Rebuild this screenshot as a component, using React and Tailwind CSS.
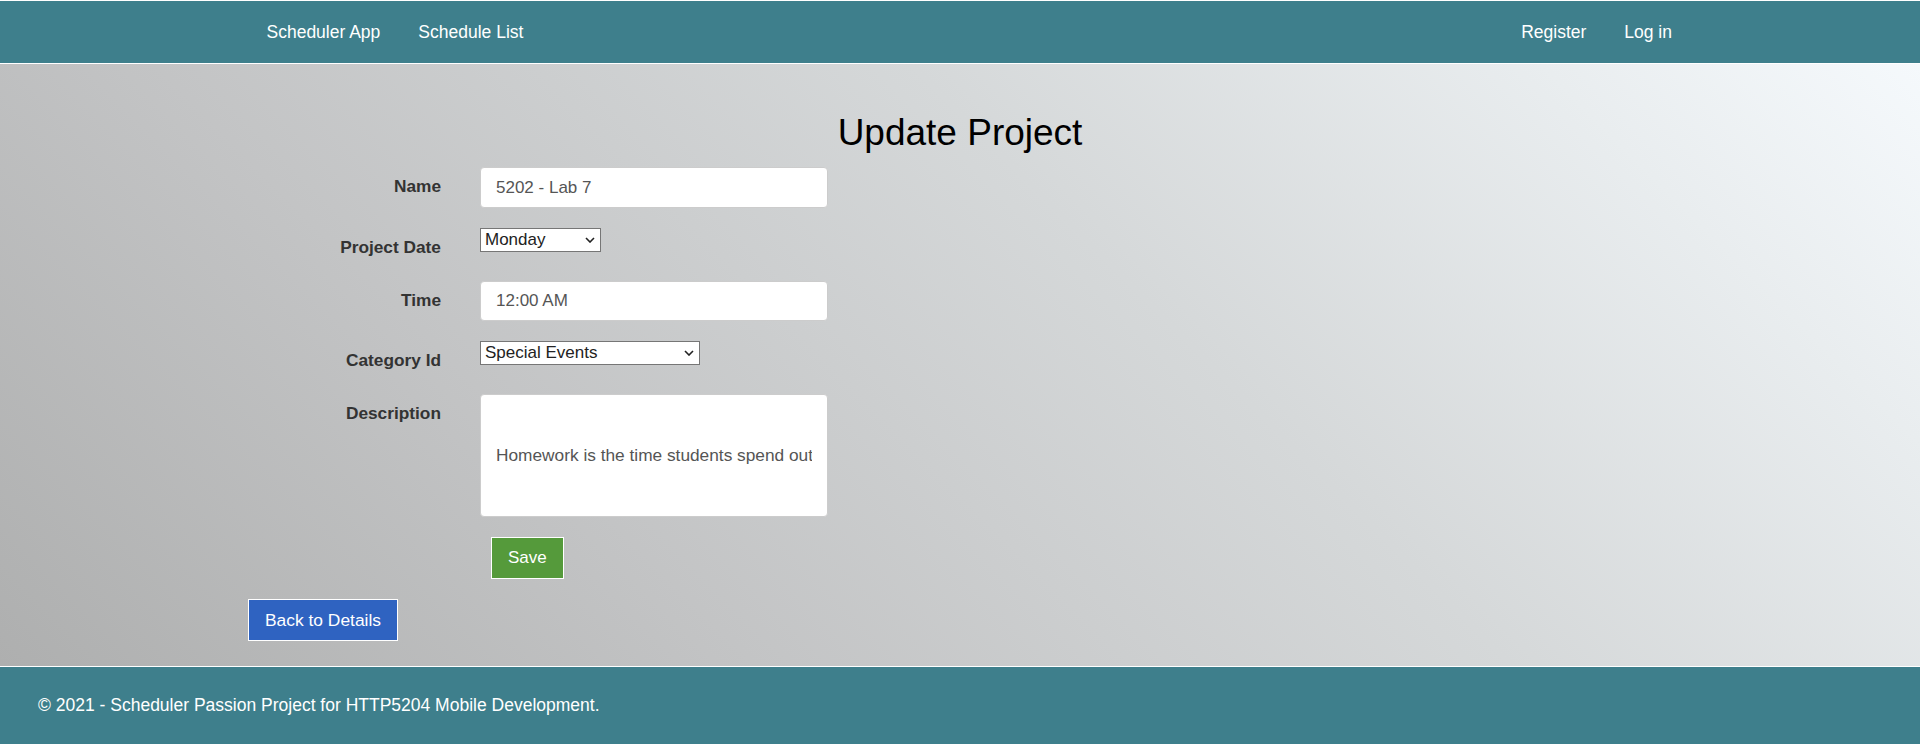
import { useState } from 'react';

// Small chevron used by the native-looking selects
const Chevron = () => (
    <svg width="10" height="6" viewBox="0 0 10 6" className="pointer-events-none absolute right-[6px] top-1/2 -translate-y-1/2">
        <path d="M1 1l4 4 4-4" fill="none" stroke="#222" strokeWidth="1.6" />
    </svg>
);

const FormRow = ({ label, children }) => (
    <div className="flex items-start min-h-[33px]">
        <label className="w-[193px] shrink-0 pt-[7px] text-right font-bold text-[17.3px] leading-[25px] text-[#333]">
            {label}
        </label>
        <div className="ml-[39px]">{children}</div>
    </div>
);

const App = () => {
    const [name, setName] = useState('5202 - Lab 7');
    const [day, setDay] = useState('Monday');
    const [time, setTime] = useState('12:00 AM');
    const [category, setCategory] = useState('Special Events');
    const [description, setDescription] = useState(
        'Homework is the time students spend outside the classroom in assigned learning activities.'
    );

    const days = ['Monday', 'Tuesday', 'Wednesday', 'Thursday', 'Friday', 'Saturday', 'Sunday'];
    const categories = ['Special Events', 'School', 'Work', 'Personal'];

    return (
        <div className="flex flex-col min-h-screen font-['Liberation_Sans',Arial,sans-serif]">
            {/* navbar */}
            <nav className="bg-[#3e7f8c] border-t border-b border-white h-[64px]">
                <div className="w-[1424px] mx-auto h-full flex items-center justify-between">
                    <div className="flex items-center gap-[38px] pl-[18.5px]">
                        <a href="#" className="text-white text-[17.5px]">Scheduler App</a>
                        <a href="#" className="text-white text-[17.5px]">Schedule List</a>
                    </div>
                    <div className="flex items-center gap-[38px]">
                        <a href="#" className="text-white text-[17.5px]">Register</a>
                        <a href="#" className="text-white text-[17.5px]">Log in</a>
                    </div>
                </div>
            </nav>

            <main className="flex-1 pt-[48px] pb-[25px] bg-[linear-gradient(45deg,#aeafaf_0%,#c3c4c5_30%,#d5d8d9_60%,#e9edef_85%,#f5f9fc_100%)]">
                <div className="w-[1424px] mx-auto">
                    <h1 className="text-center text-[37px] leading-[41px] font-normal text-black">Update Project</h1>

                    <form className="mt-[14px] flex flex-col gap-[20px]" onSubmit={(e) => e.preventDefault()}>
                        <FormRow label="Name">
                            <input
                                value={name}
                                onChange={(e) => setName(e.target.value)}
                                className="h-[41px] w-[348px] rounded-[4px] border border-[#ccc] bg-white px-[15px] text-[17px] text-[#555] outline-none"
                            />
                        </FormRow>
                        <FormRow label="Project Date">
                            <div className="relative w-[121px]">
                                <select
                                    value={day}
                                    onChange={(e) => setDay(e.target.value)}
                                    className="appearance-none h-[24px] w-full border border-[#767676] bg-white pl-[4px] text-[17px] leading-[22px] text-[#222] outline-none"
                                >
                                    {days.map((d) => <option key={d}>{d}</option>)}
                                </select>
                                <Chevron />
                            </div>
                        </FormRow>
                        <FormRow label="Time">
                            <input
                                value={time}
                                onChange={(e) => setTime(e.target.value)}
                                className="h-[40px] w-[348px] rounded-[4px] border border-[#ccc] bg-white px-[15px] text-[17px] text-[#555] outline-none"
                            />
                        </FormRow>
                        <FormRow label="Category Id">
                            <div className="relative w-[220px]">
                                <select
                                    value={category}
                                    onChange={(e) => setCategory(e.target.value)}
                                    className="appearance-none h-[24px] w-full border border-[#767676] bg-white pl-[4px] text-[17px] leading-[22px] text-[#222] outline-none"
                                >
                                    {categories.map((c) => <option key={c}>{c}</option>)}
                                </select>
                                <Chevron />
                            </div>
                        </FormRow>
                        <FormRow label="Description">
                            <input
                                value={description}
                                onChange={(e) => setDescription(e.target.value)}
                                className="h-[123px] w-[348px] rounded-[4px] border border-[#ccc] bg-white px-[15px] text-[17.3px] text-[#555] outline-none"
                            />
                        </FormRow>
                        <div>
                            <button
                                type="submit"
                                className="ml-[243px] h-[42px] px-[16px] border border-white bg-[#559a3b] text-white text-[17px]"
                            >
                                Save
                            </button>
                        </div>
                    </form>

                    <div className="mt-[20px]">
                        <a href="#" className="inline-flex items-center h-[42px] px-[16px] border border-white bg-[#2f63c1] text-white text-[17.4px]">
                            Back to Details
                        </a>
                    </div>
                </div>
            </main>

            <footer className="bg-[#3e7f8c] border-t border-white h-[78px] flex items-center pl-[38px]">
                <p className="text-white text-[17.5px]">&copy; 2021 - Scheduler Passion Project for HTTP5204 Mobile Development.</p>
            </footer>
        </div>
    );
};

export default App;
